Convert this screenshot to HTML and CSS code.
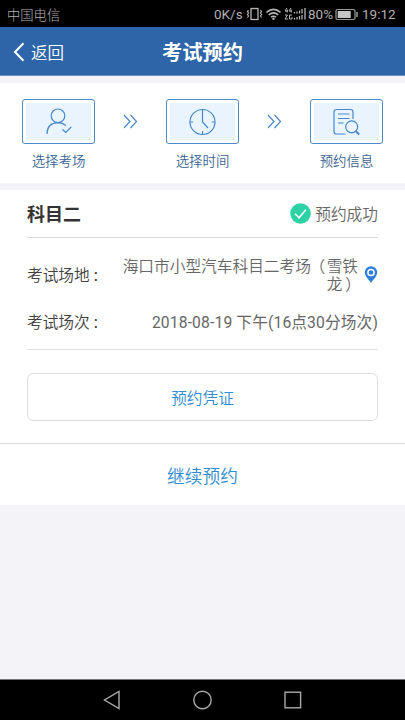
FILE: index.html
```html
<!DOCTYPE html>
<html lang="zh-CN">
<head>
<meta charset="utf-8">
<title>考试预约</title>
<link rel="stylesheet" href="styles.css">
</head>
<body>
<div class="status">
  <span class="carrier">中国电信</span>
  <span class="speed">0K/s</span>
  <svg class="signals" width="62" height="16" viewBox="0 0 62 16" fill="none" stroke="#b4b4b4">
    <rect x="5" y="2.5" width="7" height="11" stroke-width="1.3"/>
    <path d="M2.500 4l-1 1.500 1 1.500-1 1.500 1 1.500-1 1.500M14.500 4l1 1.500-1 1.500 1 1.500-1 1.500 1 1.500" stroke-width="1.200"/>
    <path d="M20.500 6.300q7-6 14 0M22.800 8.800q4.700-4 9.400 0M25 11.200q2.500-2 5 0" stroke-width="1.600"/>
    <circle cx="27.500" cy="12.700" r="1.200" fill="#b4b4b4" stroke="none"/>
    <path d="M41 2l-2 3h3M41.200 3.500v3M45 2l-2 3h3M45.200 3.500v3M39 9h2.500l-2.500 4h3M46 9h-2.500v4h2.500v-2" stroke-width="1"/>
    <path d="M48.500 6v1.500M51 5.500v2M53.500 4.500v3M56 3v4.500M59 2v5.500M48.500 12v1.500M51 11v2.500M53.500 10v3.500M56 9v4.500M59 7.500v6" stroke-width="1.300"/>
  </svg>
  <span class="percent">80%</span>
  <svg class="battery" width="24" height="13" viewBox="0 0 24 13">
    <rect x="1" y="1.500" width="19" height="10" rx="1.500" fill="none" stroke="#999" stroke-width="1.200"/>
    <rect x="2.700" y="3" width="13" height="7" fill="#c4c4c4"/>
    <path d="M22 4v5" stroke="#999" stroke-width="1.500"/>
  </svg>
  <span class="clock">19:12</span>
</div>
<header class="header">
  <div class="back">
    <svg width="12" height="20" viewBox="0 0 12 20" fill="none" stroke="#fff" stroke-width="2"><path d="M10.500 1.200L2 10l8.500 8.800"/></svg>
    <span>返回</span>
  </div>
  <h1>考试预约</h1>
</header>
<nav class="steps">
  <div class="step">
    <div class="tile"><div class="fill">
      <svg width="28" height="28" viewBox="0 0 28 28"><circle cx="13" cy="7.800" r="6.800"/><path d="M2 26C2 18 6.500 14.800 13 14.600q4.500 0 8 2.900M17.500 21.500l3.200 3 5.500-5.500"/></svg>
    </div></div>
    <span>选择考场</span>
  </div>
  <svg class="next" width="16" height="15" viewBox="0 0 16 15"><path d="M1 1l6 6.500-6 6.500M7.500 1l6 6.500-6 6.500"/></svg>
  <div class="step">
    <div class="tile"><div class="fill">
      <svg width="28" height="28" viewBox="0 0 28 28"><circle cx="13.500" cy="14" r="12.500"/><path d="M13.500 1.500V14l5.500 6M1 14h3.200M22.800 14h3.200M13.500 23v3.500"/></svg>
    </div></div>
    <span>选择时间</span>
  </div>
  <svg class="next" width="16" height="15" viewBox="0 0 16 15"><path d="M1 1l6 6.500-6 6.500M7.500 1l6 6.500-6 6.500"/></svg>
  <div class="step">
    <div class="tile"><div class="fill">
      <svg width="28" height="28" viewBox="0 0 28 28"><path d="M20 11V4q0-2.500-2.500-2.500h-14Q1 1.500 1 4v19.500Q1 26 3.500 26h9M5 6h11.500M5 10.500h11.500M5 15h5.500"/><circle cx="18.700" cy="18.800" r="6"/><path d="M22.700 23l3.500 3.500" stroke-width="1.800"/></svg>
    </div></div>
    <span>预约信息</span>
  </div>
</nav>
<main class="card">
  <div class="subject">
    <h2>科目二</h2>
    <div class="success">
      <svg width="21" height="21" viewBox="0 0 21 21"><circle cx="10.500" cy="10.500" r="10.300" fill="#2dd1a5"/><path d="M5 10.800l4 4 6.800-8" fill="none" stroke="#fff" stroke-width="1.500"/></svg>
      <span>预约成功</span>
    </div>
  </div>
  <div class="details">
    <div class="row place">
      <div class="label">考试场地<span class="colon">:</span></div>
      <div class="value">海口市小型汽车科目二考场<span class="open">（</span>雪铁<span class="tail">龙<span class="close">）</span></span></div>
      <svg class="pin" width="14" height="17" viewBox="0 0 14 17"><path d="M7 .3a6.200 6.200 0 0 0-6.200 6.200C.8 10 4.500 13.500 7 16.700 9.500 13.500 13.200 10 13.200 6.500A6.200 6.200 0 0 0 7 .3z" fill="#2e7fdd"/><circle cx="7" cy="6.500" r="3.100" fill="#2e7fdd" stroke="#fff" stroke-width="1.500"/></svg>
    </div>
    <div class="row session">
      <div class="label">考试场次<span class="colon">:</span></div>
      <div class="value">2018-08-19 下午(16点30分场次)</div>
    </div>
  </div>
  <button class="voucher">预约凭证</button>
  <div class="continue">继续预约</div>
</main>
<footer class="keys">
  <svg width="18" height="20" viewBox="0 0 18 20"><path d="M16 1.500v17L1.500 10z"/></svg>
  <svg width="20" height="20" viewBox="0 0 20 20"><circle cx="9.500" cy="10" r="8.700"/></svg>
  <svg width="18" height="18" viewBox="0 0 18 18"><rect x="1" y="1.200" width="15.600" height="15.600"/></svg>
</footer>
</body>
</html>
```
FILE: styles.css
```css
* { box-sizing: border-box; }
body {
  margin: 0;
  width: 405px;
  height: 720px;
  display: flex;
  flex-direction: column;
  overflow: hidden;
  background: #f3f3f8;
  font-family: Roboto, "Noto Sans CJK SC", sans-serif;
  font-weight: 350;
}
svg { display: block; flex: none; }
h1, h2 { margin: 0; }
.status {
  height: 27px;
  flex: none;
  display: flex;
  align-items: center;
  padding: 1px 8px 0 7px;
  background: #000;
  color: #b0b0b0;
  font-size: 13.5px;
  font-weight: 400;
  white-space: nowrap;
}
.carrier { margin-right: auto; font-size: 13.300px; font-weight: 300; }
.speed { width: 32px; }
.percent { width: 27px; }
.clock { width: 35px; margin-left: 3px; }
.header {
  height: 49px;
  flex: none;
  display: grid;
  grid-template-columns: 1fr auto 1fr;
  align-items: center;
  background: #2d65a8;
  border-bottom: 1px solid #6d91c0;
  color: #fff;
}
.back {
  display: flex;
  align-items: center;
  gap: 6px;
  padding: 1px 0 0 13px;
  font-size: 16.500px;
}
.header h1 { padding-top: 3px; font-size: 20.300px; line-height: 28px; }
.steps {
  height: 100px;
  flex: none;
  margin: 7px 0;
  padding: 16px 22px 0 22px;
  display: flex;
  justify-content: space-between;
  align-items: flex-start;
  background: #fff;
}
.step {
  width: 73px;
  display: flex;
  flex-direction: column;
  align-items: center;
  gap: 8px;
  color: #396494;
  font-size: 13.400px;
  line-height: 20px;
}
.tile {
  width: 73px;
  height: 45px;
  padding: 3px;
  border: 1px solid #4b8aca;
  border-radius: 3px;
}
.fill {
  height: 100%;
  display: grid;
  place-items: center;
  background: #e9f4fe;
}
.fill svg, .next { fill: none; stroke: #4788cd; stroke-width: 1.200; }
.next { margin-top: 15px; }
.card {
  height: 315px;
  flex: none;
  display: flex;
  flex-direction: column;
  background: #fff;
}
.subject {
  height: 48px;
  margin: 0 27px;
  display: flex;
  justify-content: space-between;
  align-items: center;
  border-bottom: 1px solid #d9d9d9;
}
.subject h2 { padding-bottom: 1px; color: #333; font-size: 18px; }
.success {
  display: flex;
  align-items: center;
  gap: 4px;
  color: #666;
  font-size: 15.700px;
}
.details {
  height: 112px;
  margin: 0 27px;
  border-bottom: 1px solid #e2e2e2;
}
.row {
  display: flex;
  align-items: center;
  font-size: 15.700px;
  line-height: 18.500px;
}
.place { height: 73px; padding-top: 3px; }
.session { height: 24px; padding-top: 1px; }
.label { color: #404040; margin-right: auto; white-space: nowrap; }
.colon { margin-left: 4px; font-weight: 500; }
.value { color: #666; text-align: right; }
.place .value { width: 237px; }
.session .value { letter-spacing: .12px; font-weight: 400; }
.open { margin: 0 1.500px 0 -1.500px; }
.tail { white-space: nowrap; }
.close { margin: 0 -3px 0 3px; }
.pin { margin-left: 6px; margin-bottom: 3px; }
.voucher {
  height: 48px;
  margin: 23px 27px 22px;
  padding: 0;
  border: 1px solid #dedee1;
  border-radius: 6px;
  background: #fff;
  color: #2f8cd0;
  font: inherit;
  font-size: 15.700px;
}
.continue {
  flex: 1;
  display: grid;
  place-items: center;
  border-top: 1px solid #dedede;
  color: #2f8cd0;
  font-size: 17.700px;
}
.keys {
  height: 41px;
  flex: none;
  margin-top: auto;
  padding: 0 103px;
  display: flex;
  align-items: center;
  justify-content: space-between;
  background: #000;
  border-top: 1px solid #77777a;
}
.keys svg { fill: none; stroke: #aaa; stroke-width: 1.400; }
```
